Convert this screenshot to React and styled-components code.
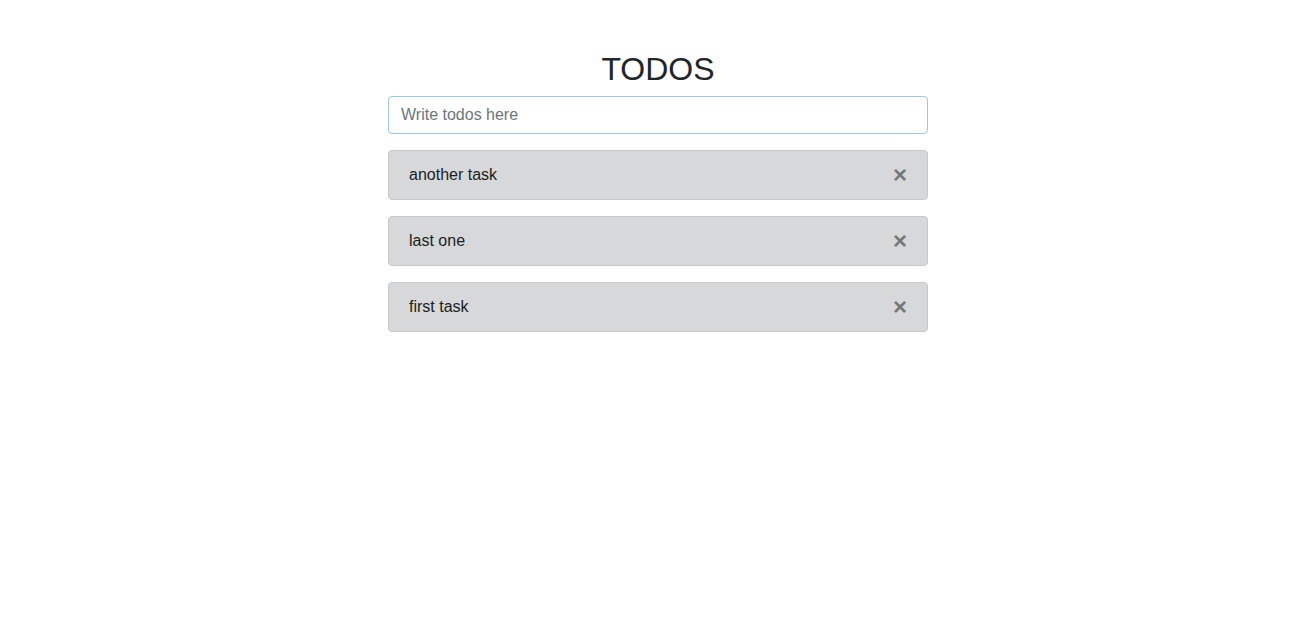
import { useState } from 'react';
import styled, { createGlobalStyle } from 'styled-components';

const GlobalStyle = createGlobalStyle`
  * { box-sizing: border-box; }
  body {
    margin: 0;
    background: #fff;
    font-family: 'Liberation Sans', Arial, sans-serif;
    color: #212529;
  }
`;

const Page = styled.main`
  padding: 50px 0 0 16px;
`;

const Column = styled.section`
  width: 540px;
  margin: 0 auto;
  display: flex;
  flex-direction: column;
`;

const Title = styled.h1`
  margin: 0 0 8px;
  font-size: 32px;
  font-weight: 400;
  line-height: 1.2;
  text-align: center;
  color: #212529;
`;

const Input = styled.input`
  height: 38px;
  padding: 6px 12px;
  font: inherit;
  font-size: 16px;
  color: #495057;
  border: 1px solid #9cc4ee;
  border-radius: 4px;
  outline: none;
  margin-bottom: 16px;

  &::placeholder {
    color: #6c757d;
  }
`;

const List = styled.ul`
  list-style: none;
  margin: 0;
  padding: 0;
  display: flex;
  flex-direction: column;
  gap: 16px;
`;

const Item = styled.li`
  display: flex;
  align-items: center;
  justify-content: space-between;
  height: 50px;
  padding: 0 20px;
  background: #d6d8d9;
  border: 1px solid #c6c8ca;
  border-radius: 4px;
  color: #1b1e21;
  font-size: 16px;
`;

const Close = styled.button`
  border: 0;
  background: none;
  padding: 0;
  font-family: 'Liberation Sans', Arial, sans-serif;
  font-size: 24px;
  font-weight: 700;
  line-height: 1;
  color: #000;
  opacity: 0.45;
  cursor: pointer;
`;

export default function App() {
  const [todos, setTodos] = useState(['another task', 'last one', 'first task']);

  return (
    <Page>
      <GlobalStyle />
      <Column>
        <Title>TODOS</Title>
        <Input placeholder="Write todos here" autoFocus />
        <List>
          {todos.map((t, i) => (
            <Item key={t}>
              <span>{t}</span>
              <Close onClick={() => setTodos(todos.filter((_, j) => j !== i))}>×</Close>
            </Item>
          ))}
        </List>
      </Column>
    </Page>
  );
}
